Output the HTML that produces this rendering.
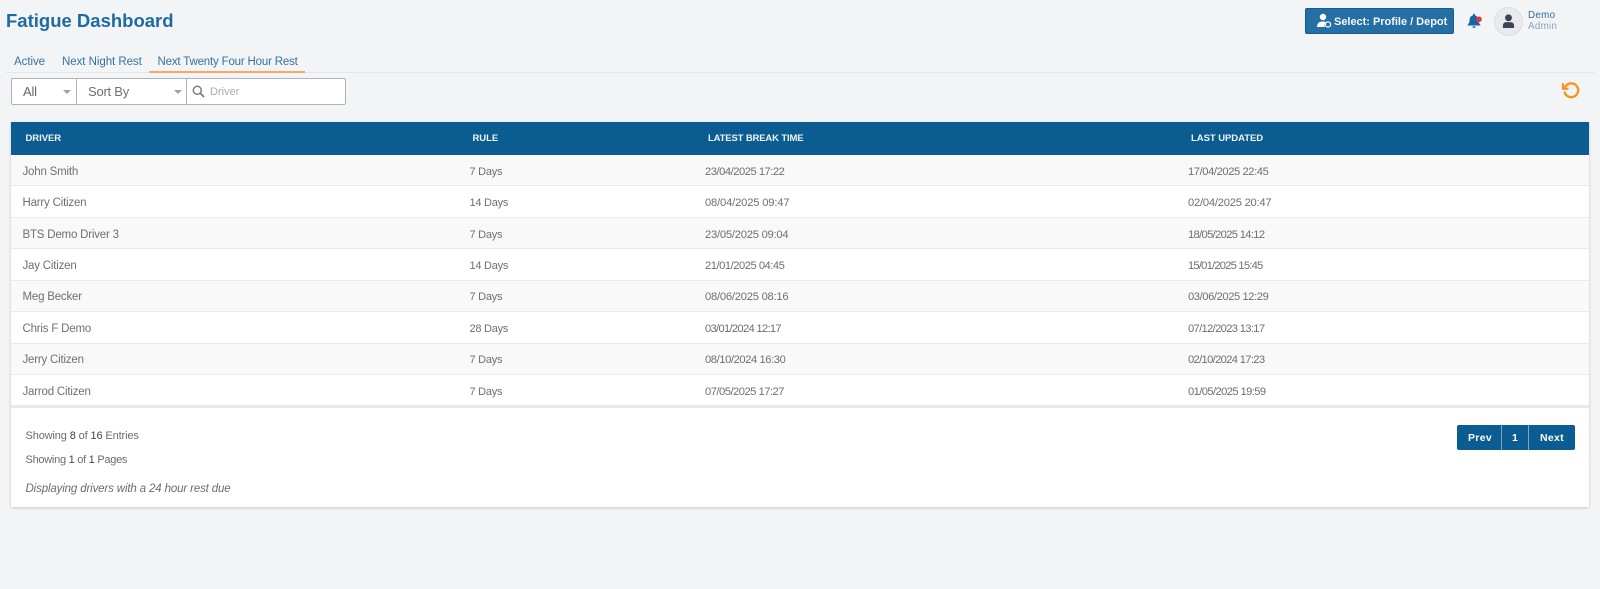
<!DOCTYPE html>
<html><head><meta charset="utf-8"><title>Fatigue Dashboard</title>
<style>
html,body{margin:0;padding:0;width:1600px;height:589px;overflow:hidden;background:#f3f4f6;font-family:"Liberation Sans",sans-serif;color:#6f6f6f}
.a{position:absolute;white-space:nowrap}
.t{line-height:16px;height:16px}
#title{left:6px;top:9px;line-height:24px;font-size:18.5px;font-weight:bold;color:#1c6ca3}
.tab{top:54px;font-size:11.5px;color:#33739f;letter-spacing:-.05px}
#card{left:11px;top:122px;width:1578px;height:385px;background:#fff;box-shadow:0 1px 3px rgba(0,0,0,.18)}
#head{left:11px;top:122px;width:1578px;height:33px;background:#0b5c91}
.th{top:131px;font-size:9.5px;font-weight:bold;color:#eef4f8;letter-spacing:-.05px}
.row{left:11px;width:1578px;height:31px;box-sizing:border-box;border-bottom:1px solid #ebebeb;background:#fff}
.tall{height:32px}
.odd{background:#f9f9f9}
.c1{font-size:11.5px;letter-spacing:-.2px}
.c2{font-size:11px;letter-spacing:-.25px}
.c3{font-size:11.2px}
.c1{left:22.5px}.c2{left:469.5px}.c3{left:705px}.c4{left:1188px}
.foot{left:25.5px;font-size:11px;color:#6c6c6c}
.foot b{font-weight:normal;color:#444}
#pg{left:1457px;top:425px;width:118px;height:25px;background:#0b5c91;border-radius:2px}
.pt{top:430px;font-size:10.5px;font-weight:bold;color:#fff;letter-spacing:.3px}
#btn{left:1305px;top:8px;width:147px;height:24px;background:#256fa4;border:1px solid #105f93;border-radius:2px}
</style></head><body>
<div class="a" id="title">Fatigue Dashboard</div>

<div class="a" id="btn"></div>
<svg class="a" style="left:1316px;top:13px" width="17" height="16" viewBox="0 0 17 16"><circle cx="7" cy="4" r="3.2" fill="#fff"/><path d="M1 14c0-4 2.500-5.500 6-5.500 1 0 2 .2 2.700.5-1 1-1.500 3-.7 5z" fill="#fff"/><circle cx="12" cy="11.500" r="2.600" fill="none" stroke="#fff" stroke-width="1.300"/></svg>
<div class="a t" style="left:1334px;top:14px;font-size:11px;font-weight:bold;color:#f4f8fb;letter-spacing:-.02px">Select: Profile / Depot</div>

<svg class="a" style="left:1467px;top:13px" width="17" height="16" viewBox="0 0 17 16"><path d="M7 .8c.6 0 1 .4 1 1v.6c2.300.5 3.400 2.400 3.400 4.500 0 2.700.9 3.700 1.900 4.700v.9H.7v-.9c1-1 1.900-2 1.900-4.700C2.600 4.800 3.700 2.900 6 2.400v-.6c0-.6.400-1 1-1z" fill="#1767a2"/><path d="M5.400 13.400h3.200c0 1-.6 1.600-1.600 1.600s-1.600-.6-1.600-1.600z" fill="#1767a2"/><circle cx="12" cy="6.300" r="2.800" fill="#e8333f"/></svg>

<div class="a" style="left:1494px;top:7px;width:27px;height:27px;border-radius:50%;background:#e9eaee;border:1px solid #dcdde2"></div>
<svg class="a" style="left:1501.500px;top:14px" width="13" height="14.500" viewBox="0 0 14 16"><circle cx="7" cy="4.200" r="3.800" fill="#3a4657"/><path d="M.8 15.500v-2.700c0-2.400 1.700-3.900 3.800-3.900h4.800c2.100 0 3.800 1.500 3.800 3.900v2.700z" fill="#3a4657"/></svg>
<div class="a t" style="left:1528px;top:7.500px;font-size:9.800px;color:#336a99;letter-spacing:.3px">Demo</div>
<div class="a t" style="left:1528px;top:19px;font-size:9.800px;color:#86a5c0;letter-spacing:.3px">Admin</div>

<div class="a t tab" style="left:14px">Active</div>
<div class="a t tab" style="left:62px">Next Night Rest</div>
<div class="a t tab" style="left:157.500px;letter-spacing:-.18px">Next Twenty Four Hour Rest</div>
<div class="a" style="left:6px;top:72px;width:1589px;height:1px;background:#e6e7ea"></div>
<div class="a" style="left:149px;top:71px;width:156px;height:2px;background:#f8ab5f"></div>

<div class="a" style="left:11px;top:78px;width:333px;height:25px;background:#fff;border:1px solid #aeb2bd;border-radius:2px"></div>
<div class="a" style="left:76px;top:78px;width:1px;height:27px;background:#aeb2bd"></div>
<div class="a" style="left:186px;top:78px;width:1px;height:27px;background:#aeb2bd"></div>
<div class="a t" style="left:23px;top:83.500px;font-size:13px;color:#666;letter-spacing:-.2px">All</div>
<div class="a t" style="left:88px;top:83.500px;font-size:13px;color:#707070;letter-spacing:-.23px">Sort By</div>
<div class="a" style="left:63px;top:89.500px;border:4px solid transparent;border-top:4px solid #9ea2ad;border-bottom:0"></div>
<div class="a" style="left:174px;top:89.500px;border:4px solid transparent;border-top:4px solid #9ea2ad;border-bottom:0"></div>
<svg class="a" style="left:192px;top:85px" width="13" height="13" viewBox="0 0 13 13"><circle cx="5.300" cy="5.300" r="4" fill="none" stroke="#777d87" stroke-width="1.500"/><path d="M8.300 8.300l3.700 3.700" stroke="#777d87" stroke-width="1.800" fill="none"/></svg>
<div class="a t" style="left:210px;top:84px;font-size:11px;color:#a9abb0">Driver</div>

<svg class="a" style="left:1562px;top:81px" width="18.500" height="18.500" viewBox="0 0 24 24" fill="none" stroke="#f7941d" stroke-width="3" stroke-linecap="round" stroke-linejoin="round"><polyline points="1 4 1 10 7 10"/><path d="M3.510 15a9 9 0 1 0 2.130-9.360L1 10"/></svg>

<div class="a" id="card"></div>
<div class="a" id="head"></div>
<div class="a t th" style="left:25.500px">DRIVER</div>
<div class="a t th" style="left:472.500px">RULE</div>
<div class="a t th" style="left:708px;letter-spacing:-.15px">LATEST BREAK TIME</div>
<div class="a t th" style="left:1191px">LAST UPDATED</div>

<div class="a row odd" style="top:155px"></div>
<div class="a t c1" style="top:164px">John Smith</div><div class="a t c2" style="top:164px">7 Days</div><div class="a t c3" style="top:164px;letter-spacing:-.48px">23/04/2025 17:22</div><div class="a t c3 c4" style="top:164px;letter-spacing:-.42px">17/04/2025 22:45</div>
<div class="a row tall" style="top:186px"></div>
<div class="a t c1" style="top:195px">Harry Citizen</div><div class="a t c2" style="top:195px">14 Days</div><div class="a t c3" style="top:195px;letter-spacing:-.17px">08/04/2025 09:47</div><div class="a t c3 c4" style="top:195px;letter-spacing:-.23px">02/04/2025 20:47</div>
<div class="a row odd" style="top:218px"></div>
<div class="a t c1" style="top:227px">BTS Demo Driver 3</div><div class="a t c2" style="top:227px">7 Days</div><div class="a t c3" style="top:227px;letter-spacing:-.23px">23/05/2025 09:04</div><div class="a t c3 c4" style="top:227px;letter-spacing:-.67px">18/05/2025 14:12</div>
<div class="a row tall" style="top:249px"></div>
<div class="a t c1" style="top:258px">Jay Citizen</div><div class="a t c2" style="top:258px">14 Days</div><div class="a t c3" style="top:258px;letter-spacing:-.48px">21/01/2025 04:45</div><div class="a t c3 c4" style="top:258px;letter-spacing:-.79px">15/01/2025 15:45</div>
<div class="a row odd" style="top:281px"></div>
<div class="a t c1" style="top:289px">Meg Becker</div><div class="a t c2" style="top:289px">7 Days</div><div class="a t c3" style="top:289px;letter-spacing:-.23px">08/06/2025 08:16</div><div class="a t c3 c4" style="top:289px;letter-spacing:-.42px">03/06/2025 12:29</div>
<div class="a row tall" style="top:312px"></div>
<div class="a t c1" style="top:321px">Chris F Demo</div><div class="a t c2" style="top:321px">28 Days</div><div class="a t c3" style="top:321px;letter-spacing:-.7px">03/01/2024 12:17</div><div class="a t c3 c4" style="top:321px;letter-spacing:-.67px">07/12/2023 13:17</div>
<div class="a row odd" style="top:344px"></div>
<div class="a t c1" style="top:352px">Jerry Citizen</div><div class="a t c2" style="top:352px">7 Days</div><div class="a t c3" style="top:352px;letter-spacing:-.42px">08/10/2024 16:30</div><div class="a t c3 c4" style="top:352px;letter-spacing:-.67px">02/10/2024 17:23</div>
<div class="a row" style="top:375px"></div>
<div class="a t c1" style="top:384px">Jarrod Citizen</div><div class="a t c2" style="top:384px">7 Days</div><div class="a t c3" style="top:384px;letter-spacing:-.51px">07/05/2025 17:27</div><div class="a t c3 c4" style="top:384px;letter-spacing:-.6px">01/05/2025 19:59</div>
<div class="a" style="left:11px;top:406px;width:1578px;height:2px;background:#e9e9ec"></div>

<div class="a t foot" style="top:428px;letter-spacing:-.13px">Showing <b>8</b> of <b>16</b> Entries</div>
<div class="a t foot" style="top:452px;letter-spacing:-.27px">Showing <b>1</b> of <b>1</b> Pages</div>
<div class="a t foot" style="top:481px;font-size:11.5px;font-style:italic;letter-spacing:-.14px">Displaying drivers with a 24 hour rest due</div>

<div class="a" id="pg"></div>
<div class="a" style="left:1501px;top:425px;width:1px;height:25px;background:#7fa6c3"></div>
<div class="a" style="left:1528px;top:425px;width:1px;height:25px;background:#7fa6c3"></div>
<div class="a t pt" style="left:1468px">Prev</div>
<div class="a t pt" style="left:1512px">1</div>
<div class="a t pt" style="left:1540px">Next</div>
</body></html>
